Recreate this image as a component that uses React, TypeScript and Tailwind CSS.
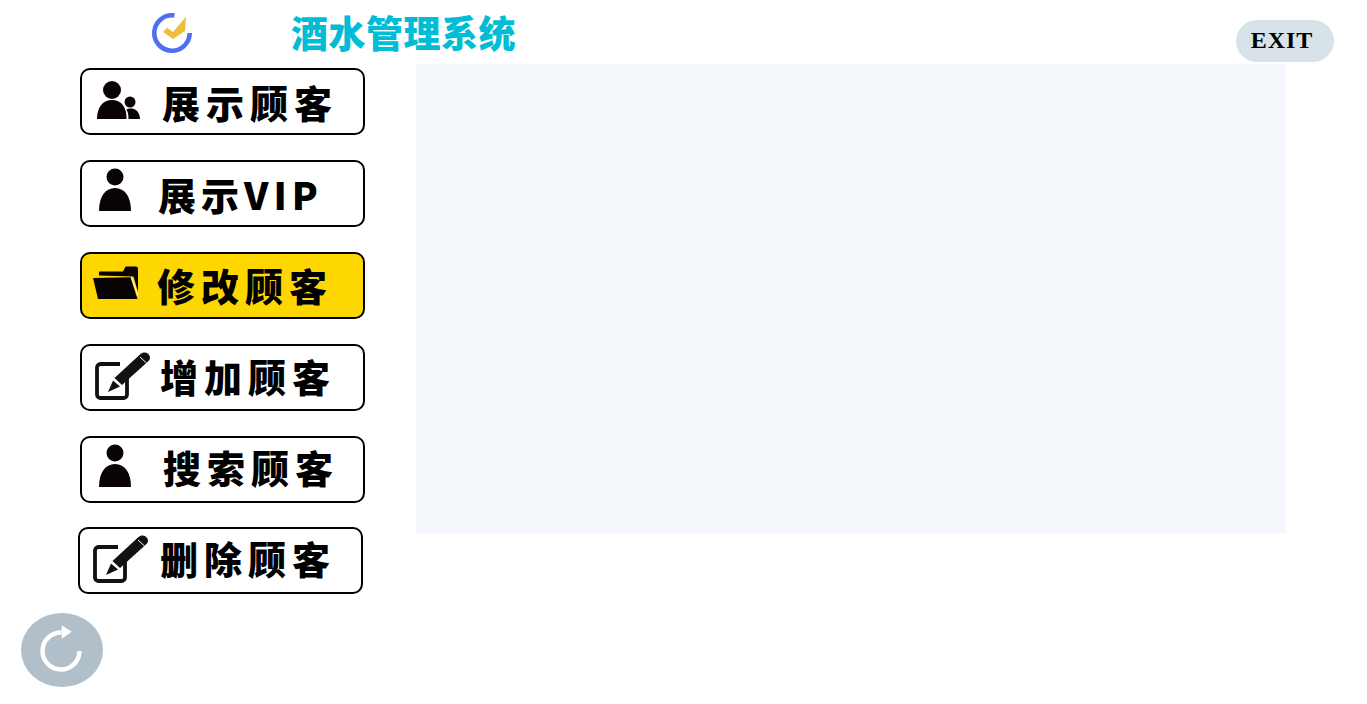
import type { ReactNode } from 'react';

const brush = "font-['Noto_Sans_CJK_SC','Noto_Sans_CJK_JP',sans-serif]";

function LogoIcon() {
  return (
    <svg width="40" height="40" viewBox="0 0 40 40" className="shrink-0">
      <path d="M22.500 2.500A17.700 17.700 0 1 0 37.700 20" fill="none" stroke="#4f6ef0" strokeWidth="4.600" />
      <path d="M11 19l4-4.300 6 4.300L34 3.700 33 18l-12 8z" fill="#f0bd3a" />
    </svg>
  );
}

function PeopleIcon() {
  return (
    <svg width="44" height="40" viewBox="0 0 44 40">
      <circle cx="15" cy="10" r="9" fill="#0a0303" />
      <path d="M0 39c0-12 6-19 15-19s15 7 14.500 19z" fill="#0a0303" />
      <circle cx="33" cy="22" r="5.500" fill="#0a0303" />
      <path d="M31.500 39c0-4-.5-7-2-9.500 1.500-1 6-1.500 8.500 0 3.500 2 5 6 5 9.500z" fill="#0a0303" />
    </svg>
  );
}

function PersonIcon() {
  return (
    <svg width="34" height="44" viewBox="0 0 34 44">
      <circle cx="17" cy="9" r="8.500" fill="#0a0303" />
      <path d="M1 43c0-14 6-23 16-23s16 9 16 23z" fill="#0a0303" />
    </svg>
  );
}

function FolderIcon() {
  return (
    <svg width="46" height="33" viewBox="0 0 46 33">
      <path d="M6 6.500c0-.5.500-1 1-1h23l2-4c.3-.5.700-1 1.500-1H43c1 0 2 1 2 2V26L40.500 10.500 6 9.500z" fill="#0a0303" />
      <path d="M0 12l37.500-.8L44.500 33H5z" fill="#0a0303" />
      <path d="M38.500 11.500l6.500 18" stroke="#fff" strokeWidth="1" />
    </svg>
  );
}

function EditIcon() {
  return (
    <svg width="56" height="50" viewBox="0 0 56 50">
      <path d="M25 13H5.500A3.500 3.500 0 0 0 2 16.500v27A3.500 3.500 0 0 0 5.500 47h23a3.500 3.500 0 0 0 3.500-3.500V26" fill="none" stroke="#111" strokeWidth="3.800" />
      <path d="M13 41l5-11.500 7 6z" fill="#111" />
      <path d="M19.500 27L45.500 3c2-1.800 5-2.200 7.500-.3 2.500 2 2.700 5 .8 7L27 34z" fill="#111" />
      <path d="M45 6l6.500 6" stroke="#fff" strokeWidth="1" />
    </svg>
  );
}

function ActionButton({
  icon,
  label,
  active = false,
  tight = false,
  className = '',
  iconClassName = '',
  textClassName = '',
}: {
  icon: ReactNode;
  label: string;
  active?: boolean;
  tight?: boolean;
  className?: string;
  iconClassName?: string;
  textClassName?: string;
}) {
  return (
    <button
      className={`flex h-[67px] w-[285px] items-center rounded-[10px] border-2 border-black ${
        active ? 'bg-[#ffd700]' : 'bg-white'
      } ${className}`}
    >
      <span className="flex w-[74px] shrink-0 items-center justify-center">
        <span className={`flex ${iconClassName}`}>{icon}</span>
      </span>
      <span
        className={`${brush} whitespace-nowrap text-[38px] font-black leading-none text-black ${
          tight ? 'tracking-[5px]' : 'tracking-[6px]'
        } ${textClassName}`}
      >
        {label}
      </span>
    </button>
  );
}

export default function App() {
  return (
    <div className="h-[704px] w-[1367px] overflow-hidden bg-white">
      <header className="flex h-16 items-start">
        <div className="ml-[152px] mt-[13px]">
          <LogoIcon />
        </div>
        <h1
          className={`${brush} ml-[99px] mt-[10px] whitespace-nowrap text-[37px] font-black leading-[44px] tracking-[0.5px] text-[#00bcd4]`}
        >
          酒水管理系统
        </h1>
        <button className="ml-auto mr-[33px] mt-5 h-[42px] w-[98px] rounded-[21px] bg-[#d8e2e9] pb-[2px] pr-[6px] font-['Liberation_Serif',serif] text-2xl font-bold tracking-[1px] text-black">
          EXIT
        </button>
      </header>

      <div className="flex items-start">
        <div className="w-[416px] shrink-0">
          <nav className="ml-20 mt-1 flex flex-col gap-[25px]">
            <ActionButton icon={<PeopleIcon />} label="展示顾客" iconClassName="mb-[3px]" textClassName="ml-[6px]" />
            <ActionButton icon={<PersonIcon />} label="展示VIP" tight iconClassName="mb-2 mr-2" textClassName="ml-0.5" />
            <ActionButton icon={<FolderIcon />} label="修改顾客" active iconClassName="mb-1.5 mr-1.5" textClassName="mb-0.5 ml-px" />
            <ActionButton icon={<EditIcon />} label="增加顾客" iconClassName="mb-[3px] ml-2" textClassName="mb-1 ml-1" />
            <ActionButton icon={<PersonIcon />} label="搜索顾客" iconClassName="mb-2 mr-2" textClassName="mb-1.5 ml-[7px]" />
            <ActionButton
              icon={<EditIcon />}
              label="删除顾客"
              className="-ml-0.5 -mt-px"
              iconClassName="mb-[3px] ml-2"
              textClassName="mb-1.5 ml-1.5"
            />
          </nav>
          <button className="ml-[21px] mt-[19px] flex h-[74px] w-[82px] items-center justify-center rounded-[50%] bg-[#b0bfca]">
            <span className="mr-0.5 flex">
              <svg width="46" height="50" viewBox="0 0 46 50">
                <path d="M41.500 26A18.500 18.500 0 1 1 23.500 7.500" fill="none" stroke="#fff" strokeWidth="4.500" />
                <path d="M23.700.3l10 6.400-10 7z" fill="#fff" />
              </svg>
            </span>
          </button>
        </div>
        <main className="h-[469px] w-[870px] bg-[#f4f7fc]" />
      </div>
    </div>
  );
}
